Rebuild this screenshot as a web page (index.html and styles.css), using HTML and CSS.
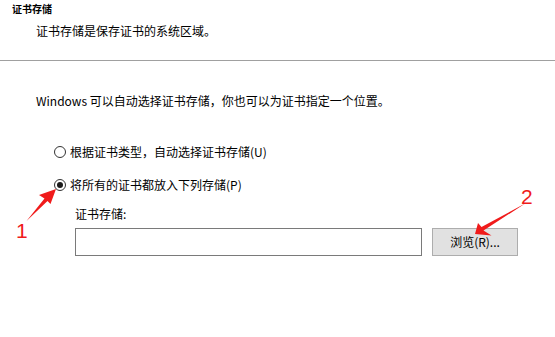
FILE: index.html
```html
<!DOCTYPE html>
<html lang="zh-CN">
<head>
<meta charset="utf-8">
<title>证书存储</title>
<link rel="stylesheet" href="styles.css">
</head>
<body>
<div class="page">
  <header class="head">
    <div class="head-title">证书存储</div>
    <div class="head-desc">证书存储是保存证书的系统区域。</div>
  </header>
  <main class="body">
    <p class="intro">Windows 可以自动选择证书存储，你也可以为证书指定一个位置。</p>
    <div class="radios">
      <label class="radio"><span class="dot"></span><span>根据证书类型，自动选择证书存储(U)</span></label>
      <label class="radio checked"><span class="dot"></span><span>将所有的证书都放入下列存储(P)</span></label>
    </div>
    <div class="store">
      <div class="store-label">证书存储:</div>
      <div class="store-row">
        <div class="field"></div>
        <div class="btn">浏览(R)...</div>
      </div>
    </div>
  </main>
  <svg class="marks" width="555" height="337" viewBox="0 0 555 337">
    <polygon points="56,189 39,195 44.5,198.5 26.5,221 47.5,201 50.5,204" fill="#f01b1b"/>
    <polygon points="475,234 478,223 481.5,227 526,203 483.5,230.5 491.5,235.5" fill="#f01b1b"/>
    <text x="16" y="238" class="num">1</text>
    <text x="521" y="204" class="num">2</text>
  </svg>
</div>
</body>
</html>
```
FILE: styles.css
```css
html, body {
  margin: 0;
  padding: 0;
  background: #ffffff;
}
.page {
  position: relative;
  width: 555px;
  height: 337px;
  overflow: hidden;
  font-family: "Noto Sans CJK SC", "Noto Sans", sans-serif;
  font-size: 12px;
  line-height: 16px;
  color: #000;
}
.head {
  height: 60px;
  border-bottom: 1px solid #a0a0a0;
  background: #ffffff;
  box-sizing: content-box;
}
.head-title {
  padding: 2px 0 0 12px;
  font-size: 10px;
  line-height: 14px;
  font-weight: bold;
}
.head-desc {
  margin-top: 7px;
  padding-left: 36px;
}
.body {
  padding-left: 36px;
}
.intro {
  margin: 32px 0 0 0;
}
.radios {
  margin-top: 35px;
  display: flex;
  flex-direction: column;
  gap: 17px;
}
.radio {
  display: flex;
  align-items: center;
  gap: 4px;
  margin-left: 18px;
}
.dot {
  width: 10px;
  height: 10px;
  border: 1px solid #333333;
  border-radius: 50%;
  display: flex;
  align-items: center;
  justify-content: center;
  flex: none;
}
.checked .dot::after {
  content: "";
  width: 6px;
  height: 6px;
  border-radius: 50%;
  background: #1a1a1a;
}
.store {
  margin-top: 13px;
  padding-left: 39px;
}
.store-row {
  margin-top: 6px;
  display: flex;
  gap: 10px;
}
.field {
  width: 345px;
  height: 26px;
  border: 1px solid #7a7a7a;
  background: #fff;
}
.btn {
  width: 84px;
  height: 26px;
  border: 1px solid #adadad;
  background: #e1e1e1;
  display: flex;
  align-items: center;
  justify-content: center;
}
.marks {
  position: absolute;
  left: 0;
  top: 0;
  pointer-events: none;
}
.num {
  font-family: "Liberation Sans", Arial, sans-serif;
  font-size: 21px;
  fill: #f01b1b;
}
```
